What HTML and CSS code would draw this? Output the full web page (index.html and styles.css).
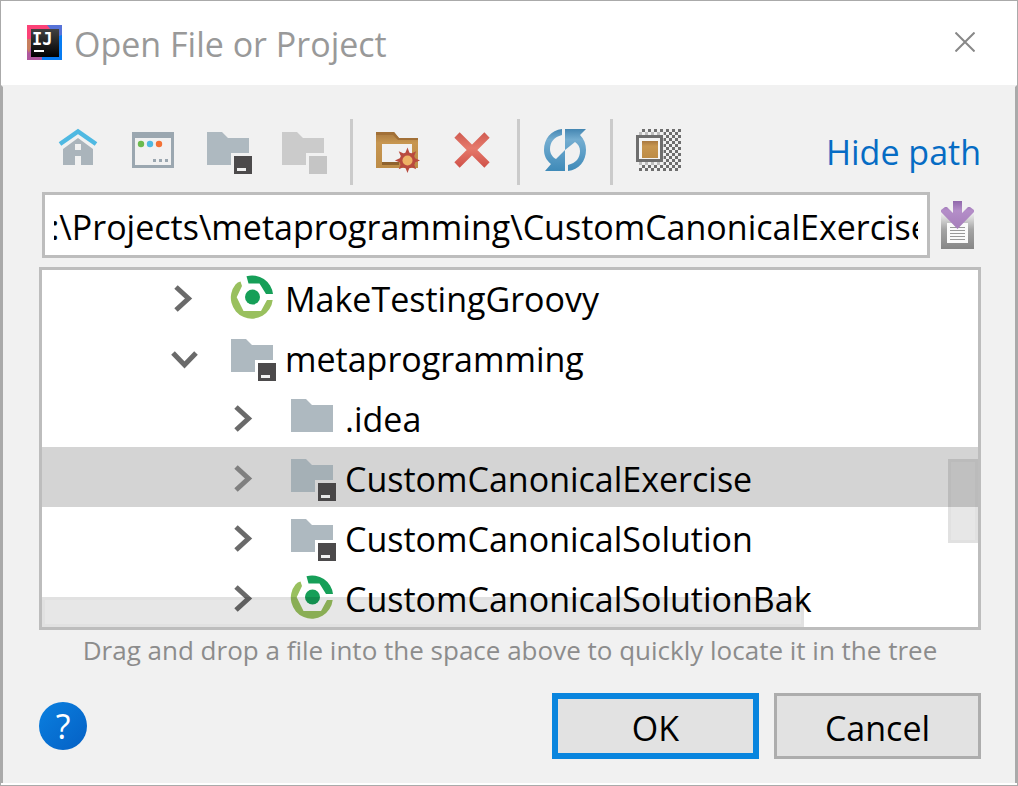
FILE: index.html
```html
<!DOCTYPE html>
<html lang="en">
<head>
<meta charset="utf-8">
<title>Open File or Project</title>
<meta name="viewport" content="width=device-width, initial-scale=1">
<link rel="stylesheet" href="styles.css">
</head>
<body>
<svg class="defs" width="0" height="0" aria-hidden="true">
  <defs>
    <linearGradient id="g-wood" x1="0" y1="0" x2="0" y2="1"><stop offset="0" stop-color="#a87840"/><stop offset=".3" stop-color="#c79650"/><stop offset="1" stop-color="#bd8c47"/></linearGradient>
    <linearGradient id="g-red" gradientUnits="userSpaceOnUse" x1="0" y1="6" x2="0" y2="42"><stop offset="0" stop-color="#cf5a50"/><stop offset=".45" stop-color="#e67a6c"/><stop offset="1" stop-color="#cf5048"/></linearGradient>
    <linearGradient id="g-blue" gradientUnits="userSpaceOnUse" x1="0" y1="3" x2="0" y2="45"><stop offset="0" stop-color="#4486b2"/><stop offset=".25" stop-color="#74add0"/><stop offset=".6" stop-color="#5b9dc6"/><stop offset="1" stop-color="#3f8ab8"/></linearGradient>
    <linearGradient id="g-purple" x1="0" y1="0" x2="0" y2="1"><stop offset="0" stop-color="#9068ab"/><stop offset=".35" stop-color="#b48ec8"/><stop offset="1" stop-color="#a57dba"/></linearGradient>
    <linearGradient id="g-tray" x1="0" y1="0" x2="0" y2="1"><stop offset="0" stop-color="#f1f1f1"/><stop offset=".45" stop-color="#a5a5a5"/><stop offset="1" stop-color="#868686"/></linearGradient>
    <linearGradient id="g-black" x1="0" y1="0" x2="0" y2="1"><stop offset="0" stop-color="#424242"/><stop offset="1" stop-color="#000"/></linearGradient>
    <pattern id="p-check" patternUnits="userSpaceOnUse" x="5" y="3" width="6" height="6"><path d="M3 0h3v3h-3zM0 3h3v3h-3z" fill="#6e6e6e"/></pattern>
    <symbol id="folder" viewBox="0 0 48 48"><path d="M3 6h15l6 6h21v27H3z" fill="#aeb9c0"/></symbol>
    <symbol id="module" viewBox="0 0 48 48"><path d="M3 6h15l6 6h21v15H27v12H3z" fill="#aeb9c0"/><path d="M30 30h18v18H30z" fill="#4c4a4b"/><path d="M33 42h9v3h-9z" fill="#f1f1f1"/></symbol>
    <symbol id="gradle" viewBox="0 0 48 48"><path d="M12.500 8.500Q9.500 9 7.500 11.500A21 21 0 1 0 44.700 27H39L33 38H15.500L8.700 24.300L14 13Z" fill="#99c05e"/><path d="M18.500 3.200A21 21 0 0 1 45 21H38L31.500 10.500H20.500Z" fill="#169f58"/><circle cx="24.500" cy="24" r="7.500" fill="#169f58"/></symbol>
    <symbol id="right" viewBox="0 0 48 48"><path d="M17 14L29.500 25.500L17 37" fill="none" stroke="#6a6a6a" stroke-width="5"/></symbol>
    <symbol id="down" viewBox="0 0 48 48"><path d="M14 20L25.500 32L37 20" fill="none" stroke="#6a6a6a" stroke-width="5"/></symbol>
  </defs>
</svg>

<main class="dialog" role="dialog" aria-labelledby="dialog-title">
  <header class="titlebar">
    <svg class="logo" viewBox="0 0 35 35" aria-hidden="true">
      <path d="M0 0h35v35H0z" fill="#087cf2"/>
      <path d="M0 0h35v10L20 15 0 20z" fill="#5773d8"/>
      <path d="M0 0h20l8 10L0 18z" fill="#fc4277"/>
      <path d="M0 14l15-1v22H0z" fill="#af579e"/>
      <path d="M0 14h6L2 28 0 24z" fill="#c77f5e"/>
      <path d="M4 4h28v28H4z" fill="url(#g-black)"/>
      <text class="logo-text" x="5" y="20">IJ</text>
      <path d="M7 25h10v2H7z" fill="#fff"/>
    </svg>
    <h1 class="title" id="dialog-title">Open File or Project</h1>
    <button class="close" type="button" aria-label="Close"><svg viewBox="0 0 20 20" width="20" height="20"><path d="M.5.5l19 19M19.500.5l-19 19" stroke="#888" stroke-width="2"/></svg></button>
  </header>

  <div class="content">
    <div class="toolbar" role="toolbar" aria-label="File chooser">
      <button class="tool" type="button" aria-label="Home"><svg class="icon" viewBox="0 0 48 48"><path d="M24 12L39 23v16H27v-9h-6v9H9V23z" fill="#aab4bb"/><path d="M21 18h6v6h-6z" fill="#f1f1f1"/><path d="M6 18L24 5.500L42 18" fill="none" stroke="#4fb9e2" stroke-width="4.500"/></svg></button>
      <button class="tool" type="button" aria-label="Desktop"><svg class="icon" viewBox="0 0 48 48"><path d="M3 6h42v36H3zM6 12v27h36V12z" fill="#9ba7b0" fill-rule="evenodd"/><circle cx="12" cy="18" r="3.200" fill="#6cba4f"/><circle cx="21" cy="18" r="3.200" fill="#4fb9e2"/><circle cx="30" cy="18" r="3.200" fill="#f47236"/><path d="M24 33h3v3h-3zM30 33h3v3h-3zM36 33h3v3h-3z" fill="#9ba7b0"/></svg></button>
      <button class="tool" type="button" aria-label="Project directory"><svg class="icon"><use href="#module"/></svg></button>
      <button class="tool" type="button" aria-label="Module directory" disabled><svg class="icon" viewBox="0 0 48 48"><path d="M3 6h15l6 6h21v15H27v12H3z" fill="#cbcbcb"/><path d="M30 30h18v18H30z" fill="#c5c5c5"/></svg></button>
      <span class="separator"></span>
      <button class="tool" type="button" aria-label="New folder"><svg class="icon" viewBox="0 0 48 48"><path d="M3 6h18l5 6h19v30H3zM9 18v18h30V18z" fill="url(#g-wood)" fill-rule="evenodd"/><path d="M3 6h18l5 6h19v2H25l-5-5H3z" fill="#a27037"/><path d="M9 36h17v3H9z" fill="#8f632e"/><path d="M34.500 21.500l2.400 6.500 6.300-2.700-2.700 6.300 6.500 2.900-6.500 2.600 2.700 6.100-6.300-2.700-2.400 6.500-2.600-6.500-6.200 2.700 2.700-6.100-6.500-2.600 6.500-2.900-2.700-6.300 6.200 2.700z" fill="#b94b3f"/><circle cx="34.500" cy="34.500" r="8" fill="#b94b3f"/><circle cx="34.500" cy="34.500" r="5" fill="#eeb265"/></svg></button>
      <button class="tool" type="button" aria-label="Delete"><svg class="icon" viewBox="0 0 48 48"><path d="M9 9l30 30M39 9L9 39" stroke="url(#g-red)" stroke-width="7.500"/></svg></button>
      <span class="separator"></span>
      <button class="tool" type="button" aria-label="Refresh"><svg class="icon" viewBox="0 0 48 48"><g fill="url(#g-blue)"><path d="M21 3v6C13 11 9 16 9 23c0 4 2 8 6 10l9-9v21H4l6-7C5 34 3 29 3 24 3 13 10 4 21 3z"/><path d="M24 3h21l-6 6c4 4 6 9 6 15 0 11-7 20-18 21v-6c8-2 12-7 12-14 0-4-2-7-5-9l-10 8z"/></g></svg></button>
      <span class="separator"></span>
      <button class="tool" type="button" aria-label="Show hidden files"><svg class="icon" viewBox="0 0 48 48"><path d="M5 3h42v42H5z" fill="url(#p-check)"/><path d="M5 6h25v33H5z" fill="#f1f1f1" opacity=".6"/><path d="M2 9h27v27H2z" fill="#6e6e6e"/><path d="M5 12h21v21H5z" fill="#f5f5f5"/><path d="M8 15h16v17H8z" fill="url(#g-wood)"/></svg></button>
      <a class="hide-path" href="#path">Hide path</a>
    </div>

    <div class="path-row">
      <input class="path" id="path" type="text" aria-label="Path" spellcheck="false" value="C:\Projects\metaprogramming\CustomCanonicalExercise">
      <button class="history" type="button" aria-label="Recent paths"><svg viewBox="0 0 33 48" width="33" height="48"><path d="M0 12h33v36H0z" fill="url(#g-tray)"/><path d="M6 22h21v20H6z" fill="#fafafa"/><path d="M9 26.500h15M9 29.500h15M9 32.500h15M9 35.500h15M9 38.500h15" stroke="#999"/><path d="M0 9L4 6h2l6 6V0h9v12l6-6h2l4 3v2L16.500 28 0 11z" fill="url(#g-purple)"/></svg></button>
    </div>

    <div class="tree-box">
      <ul class="tree" role="tree" aria-label="Files">
        <li class="row" role="treeitem" aria-level="1" aria-expanded="false"><svg class="icon arrow"><use href="#right"/></svg><svg class="icon"><use href="#gradle"/></svg><span class="name">MakeTestingGroovy</span></li>
        <li class="row" role="treeitem" aria-level="1" aria-expanded="true"><svg class="icon arrow"><use href="#down"/></svg><svg class="icon"><use href="#module"/></svg><span class="name">metaprogramming</span></li>
        <li class="row nested" role="treeitem" aria-level="2" aria-expanded="false"><svg class="icon arrow"><use href="#right"/></svg><svg class="icon"><use href="#folder"/></svg><span class="name">.idea</span></li>
        <li class="row nested selected" role="treeitem" aria-level="2" aria-expanded="false" aria-selected="true"><svg class="icon arrow"><use href="#right"/></svg><svg class="icon"><use href="#module"/></svg><span class="name">CustomCanonicalExercise</span></li>
        <li class="row nested" role="treeitem" aria-level="2" aria-expanded="false"><svg class="icon arrow"><use href="#right"/></svg><svg class="icon"><use href="#module"/></svg><span class="name">CustomCanonicalSolution</span></li>
        <li class="row nested" role="treeitem" aria-level="2" aria-expanded="false"><svg class="icon arrow"><use href="#right"/></svg><svg class="icon"><use href="#gradle"/></svg><span class="name">CustomCanonicalSolutionBak</span></li>
      </ul>
      <div class="thumb thumb-vertical"></div>
      <div class="thumb thumb-horizontal"></div>
    </div>

    <p class="hint">Drag and drop a file into the space above to quickly locate it in the tree</p>

    <footer class="actions">
      <button class="help" type="button" aria-label="Help">?</button>
      <button class="button primary" type="button">OK</button>
      <button class="button" type="button">Cancel</button>
    </footer>
  </div>
</main>
<script src="script.js"></script>
</body>
</html>
```

FILE: styles.css
```css
* { box-sizing: border-box; }

body {
  margin: 0;
  background: #fff;
  color: #000;
  font-family: "Open Sans", "Noto Sans", sans-serif;
  font-size: 34px;
  line-height: 48px;
}

button {
  margin: 0;
  padding: 0;
  border: 0;
  background: none;
  color: inherit;
  font: inherit;
}

svg { display: block; flex: none; }
.defs { position: absolute; }
.icon { width: 48px; height: 48px; }

.dialog {
  display: flex;
  flex-direction: column;
  min-height: 100vh;
  border: 1px solid #aaa;
  background: #fff;
}

.titlebar {
  display: flex;
  align-items: center;
  gap: 12px;
  height: 84px;
  padding: 0 42px 2px 26px;
}

.logo { width: 35px; height: 35px; }
.logo-text { font: bold 17px "DejaVu Sans Mono", monospace; fill: #fff; }

.title {
  flex: 1;
  margin: 0;
  padding-top: 4px;
  color: #999;
  font-size: 34px;
  font-weight: 400;
}

.content {
  flex: 1;
  margin-bottom: 2px;
  padding: 32px 34px 24px 36px;
  border: solid #aaa;
  border-width: 0 2px;
  border-top: 2px solid #f1f1f1;
  background: #f1f1f1;
}

.toolbar {
  display: flex;
  align-items: center;
  height: 66px;
  margin-bottom: 7px;
}

.tool { padding: 0 12px 4px 15px; }

.separator {
  width: 3px;
  height: 66px;
  margin: 0 5px 0 11px;
  background: #cbcbcb;
}

.separator ~ .separator { margin: 0 6px 0 9px; }

.hide-path {
  margin-left: auto;
  color: #066cc4;
  text-decoration: none;
}

.path-row {
  display: flex;
  align-items: center;
  gap: 11px;
  margin: 0 7px 9px 3px;
}

.path {
  flex: 1;
  min-width: 0;
  height: 66px;
  padding: 3px 9px 0;
  border: 3px solid #bdbdbd;
  border-radius: 0;
  outline: 0;
  background: #fff;
  color: #000;
  font: inherit;
}

.tree-box {
  position: relative;
  height: 363px;
  overflow: hidden;
  border: 3px solid #bdbdbd;
  background: #fff;
}

.tree {
  margin: -3px 0 0;
  padding: 0;
  list-style: none;
}

.row {
  display: flex;
  align-items: center;
  height: 60px;
  padding-left: 117px;
  white-space: nowrap;
}

.nested { padding-left: 177px; }
.selected { background: #d4d4d4; }
.selected .icon { filter: brightness(.95); }
.selected .arrow { opacity: .75; }
.arrow { margin-right: 21px; }
.name { padding: 4px 0 0 9px; }

.thumb {
  position: absolute;
  border: 3px solid rgba(0, 0, 0, .025);
  background: rgba(0, 0, 0, .095);
}

.thumb-vertical { top: 189px; right: 0; width: 30px; height: 84px; }
.thumb-horizontal { bottom: 0; left: 0; width: 762px; height: 30px; }

.hint {
  margin: 2px 0 25px;
  color: #8c8c8c;
  font-size: 26px;
  line-height: 36px;
  text-align: center;
}

.actions {
  display: flex;
  align-items: center;
  gap: 15px;
}

.help {
  width: 48px;
  height: 48px;
  margin-right: auto;
  border-radius: 50%;
  background: linear-gradient(135deg, #0a80e0, #0560c4);
  color: #fff;
}

.button {
  width: 207px;
  height: 66px;
  padding-top: 4px;
  border: 3px solid #adadad;
  background: #e2e2e2;
}

.primary { border: 6px solid #0985de; }
```

FILE: script.js
```js
const path = document.getElementById("path");
const pen = document.createElement("canvas").getContext("2d");
pen.font = getComputedStyle(path).font;
path.scrollLeft = pen.measureText("C:").width - 5;
```
